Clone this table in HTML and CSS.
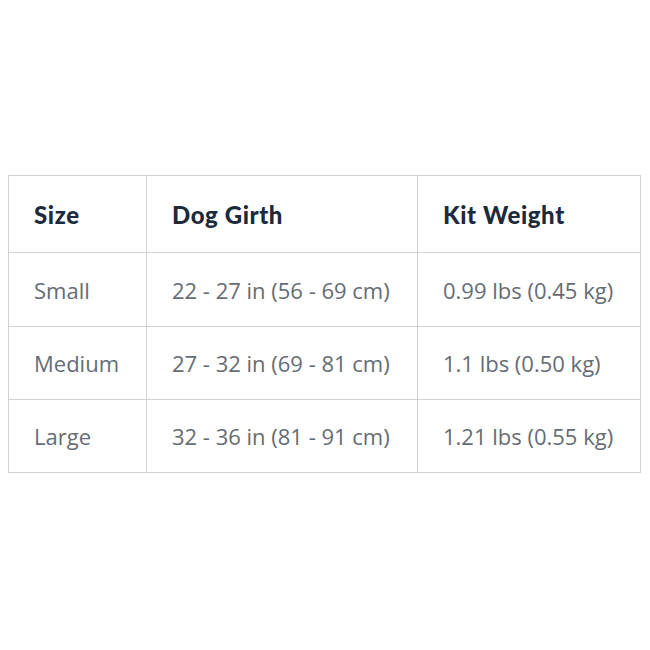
FILE: index.html
```html
<!DOCTYPE html>
<html>
<head>
<meta charset="utf-8">
<link rel="stylesheet" href="styles.css">
</head>
<body>
<div class="page">
<table class="sizes">
  <colgroup>
    <col class="c1"><col class="c2"><col class="c3">
  </colgroup>
  <thead>
    <tr class="head"><th>Size</th><th>Dog Girth</th><th>Kit Weight</th></tr>
  </thead>
  <tbody>
    <tr class="r1"><td>Small</td><td>22 - 27 in (56 - 69 cm)</td><td>0.99 lbs (0.45 kg)</td></tr>
    <tr class="r2"><td>Medium</td><td>27 - 32 in (69 - 81 cm)</td><td>1.1 lbs (0.50 kg)</td></tr>
    <tr class="r3"><td>Large</td><td>32 - 36 in (81 - 91 cm)</td><td>1.21 lbs (0.55 kg)</td></tr>
  </tbody>
</table>
</div>
</body>
</html>
```
FILE: styles.css
```css
html, body {
  margin: 0;
  padding: 0;
  background: #ffffff;
}
.page {
  padding: 175px 10px 0 8px;
}
.sizes {
  width: 632px;
  border-collapse: collapse;
  table-layout: fixed;
  border: 1px solid #cfcfcf;
}
.c1 { width: 138px; }
.c2 { width: 271px; }
.c3 { width: 223px; }
.sizes th,
.sizes td {
  border: 1px solid #d2d2d2;
  text-align: left;
  vertical-align: middle;
  padding: 0 0 0 25px;
  white-space: nowrap;
}
.sizes th {
  height: 76px;
  font-family: "Lato", "Open Sans", sans-serif;
  font-weight: 900;
  font-size: 24px;
  color: #1c2a3b;
  letter-spacing: 0.6px;
}
.sizes td {
  height: 72px;
  font-family: "Open Sans", sans-serif;
  font-size: 22px;
  color: #666c74;
}
.sizes .r1 td { height: 73px; }
```
